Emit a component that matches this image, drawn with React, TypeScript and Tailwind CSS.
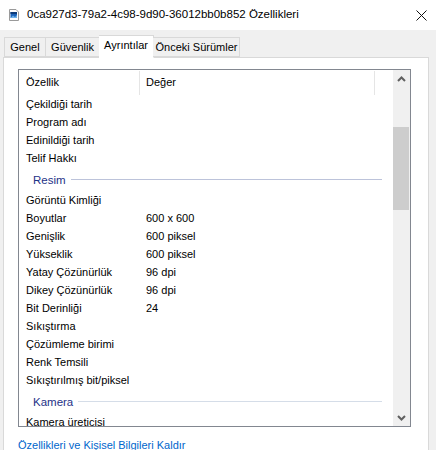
import React from 'react';

type Row = { kind: 'row'; name: string; value?: string } | { kind: 'group'; name: string };

const ROWS: Row[] = [
  { kind: 'row', name: 'Çekildiği tarih' },
  { kind: 'row', name: 'Program adı' },
  { kind: 'row', name: 'Edinildiği tarih' },
  { kind: 'row', name: 'Telif Hakkı' },
  { kind: 'group', name: 'Resim' },
  { kind: 'row', name: 'Görüntü Kimliği' },
  { kind: 'row', name: 'Boyutlar', value: '600 x 600' },
  { kind: 'row', name: 'Genişlik', value: '600 piksel' },
  { kind: 'row', name: 'Yükseklik', value: '600 piksel' },
  { kind: 'row', name: 'Yatay Çözünürlük', value: '96 dpi' },
  { kind: 'row', name: 'Dikey Çözünürlük', value: '96 dpi' },
  { kind: 'row', name: 'Bit Derinliği', value: '24' },
  { kind: 'row', name: 'Sıkıştırma' },
  { kind: 'row', name: 'Çözümleme birimi' },
  { kind: 'row', name: 'Renk Temsili' },
  { kind: 'row', name: 'Sıkıştırılmış bit/piksel' },
  { kind: 'group', name: 'Kamera' },
  { kind: 'row', name: 'Kamera üreticisi' },
  { kind: 'row', name: 'Kamera modeli' },
];

const TABS = [
  { label: 'Genel', w: 'w-[42px]' },
  { label: 'Güvenlik', w: 'w-[54px]' },
  { label: 'Ayrıntılar', w: 'w-[55px]' },
  { label: 'Önceki Sürümler', w: 'w-[87px]' },
];

function FileIcon() {
  return (
    <svg width="10" height="12" viewBox="0 0 10 12" className="shrink-0">
      <path d="M0.5 0.5 H7 L9.5 3 V11.5 H0.5 Z" fill="#fff" stroke="#9a9a9a" />
      <rect x="1.5" y="3" width="6.5" height="6" fill="#1b62b8" />
      <rect x="1.5" y="3" width="6.5" height="2" fill="#0e3c7a" />
      <path d="M1.5 9 L4 6.5 L6 8 L8 6 V9 Z" fill="#6fb2ea" />
    </svg>
  );
}

export default function App() {
  return (
    <div className="w-[436px] h-[450px] overflow-hidden bg-[#f0f0f0] font-['Segoe_UI','Liberation_Sans',Arial,sans-serif] text-[11px] leading-none text-black">
      {/* Title bar */}
      <div className="h-[30px] bg-white flex items-center pl-[9px] pr-[8px]">
        <FileIcon />
        <span className="ml-[8px] text-[11.5px]">0ca927d3-79a2-4c98-9d90-36012bb0b852 Özellikleri</span>
        <svg width="11" height="11" viewBox="0 0 11 11" className="ml-auto mr-[1px]">
          <path d="M0.5 0.5 L10.5 10.5 M10.5 0.5 L0.5 10.5" stroke="#111" strokeWidth="1" />
        </svg>
      </div>

      {/* Tabs */}
      <div className="flex items-end h-[27px] pl-[4px] relative z-10">
        {TABS.map((t, i) => {
          const active = i === 2;
          return (
            <div
              key={t.label}
              className={[
                'flex items-center justify-center whitespace-nowrap border border-[#d9d9d9]',
                t.w,
                i > 0 ? 'border-l-0' : '',
                active
                  ? 'bg-white h-[23px] border-b-white border-l -mb-[1px] -ml-[1px] -mr-[1px] pb-[2px]'
                  : 'bg-[#f0f0f0] h-[20px]',
                i === 3 ? 'pl-[1px]' : '',
              ].join(' ')}
            >
              {t.label}
            </div>
          );
        })}
      </div>

      {/* Tab page */}
      <div className="ml-[3px] w-[426px] h-[400px] bg-white border border-[#d9d9d9] pt-[11px] pl-[14px]">
        {/* List box */}
        <div className="w-[393px] h-[358px] border border-[#828790] flex overflow-hidden">
          <div className="flex-1 overflow-hidden">
            {/* Header */}
            <div className="h-[25px] flex items-center relative">
              <span className="w-[127px] pl-[7px]">Özellik</span>
              <span>Değer</span>
              <div className="absolute left-[120px] top-[1px] h-[24px] w-px bg-[#e5e5e5]" />
              <div className="absolute left-[355px] top-[1px] h-[24px] w-px bg-[#e5e5e5]" />
            </div>
            {ROWS.map((r) =>
              r.kind === 'group' ? (
                <div key={r.name} className="h-[24px] flex items-center pl-[14px] pr-[11px] pt-[3px]">
                  <span className="text-[#1e3287] text-[11.5px]">{r.name}</span>
                  <div
                    className={[
                      'flex-1 h-px ml-[5px] -mt-[2px]',
                      r.name === 'Resim' ? 'bg-[#bcc3da]' : 'bg-[#d5dde8]',
                    ].join(' ')}
                  />
                </div>
              ) : (
                <div key={r.name} className="h-[18px] flex items-center">
                  <span className="w-[127px] pl-[7px] whitespace-nowrap">{r.name}</span>
                  <span>{r.value ?? ''}</span>
                </div>
              ),
            )}
          </div>
          {/* Scrollbar */}
          <div className="w-[17px] bg-[#f0f0f0] flex flex-col">
            <div className="h-[17px] flex items-center justify-center">
              <svg width="9" height="6" viewBox="0 0 9 6">
                <path d="M1 5 L4.5 1.5 L8 5" stroke="#606060" strokeWidth="2" fill="none" />
              </svg>
            </div>
            <div className="h-[40px]" />
            <div className="h-[83px] bg-[#cdcdcd] mr-[1px]" />
            <div className="flex-1" />
            <div className="h-[17px] flex items-center justify-center">
              <svg width="9" height="6" viewBox="0 0 9 6">
                <path d="M1 1 L4.5 4.5 L8 1" stroke="#606060" strokeWidth="2" fill="none" />
              </svg>
            </div>
          </div>
        </div>
        <div className="mt-[13px] text-[#0066cc]">Özellikleri ve Kişisel Bilgileri Kaldır</div>
      </div>
    </div>
  );
}
